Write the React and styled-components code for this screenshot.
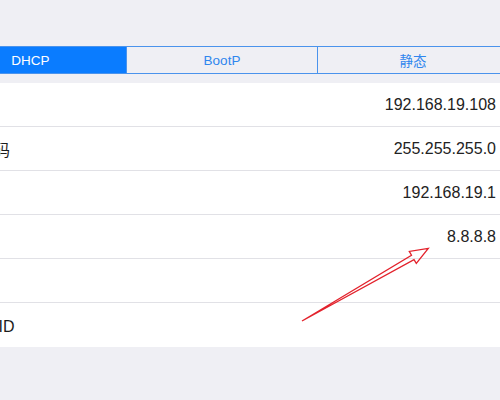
import React from "react";
import styled, { createGlobalStyle } from "styled-components";

const GlobalStyle = createGlobalStyle`
  body {
    margin: 0;
    background: #efeff4;
    font-family: "Liberation Sans", "Noto Sans CJK SC", sans-serif;
  }
`;

const Page = styled.div`
  position: relative;
  width: 500px;
  height: 400px;
  overflow: hidden;
  background: #efeff4;
`;

// the screenshot is cropped on the left, so the whole panel sits 70px off screen
const Panel = styled.div`
  margin-left: -70px;
  width: 570px;
  padding-top: 46px;
`;

// wider than the visible area: its right end is cut off in the shot
const Segmented = styled.div`
  display: grid;
  grid-template-columns: repeat(3, 191px);
  width: 576px;
  margin-left: 4px;
  height: 28px;
  box-sizing: border-box;
  border: 1.5px solid #4a93ec;
  border-radius: 4px;
  overflow: hidden;
`;

const Segment = styled.div`
  display: flex;
  align-items: center;
  justify-content: center;
  font-size: 13.5px;
  color: ${(p) => (p.$active ? "#ffffff" : "#2f86ee")};
  background: ${(p) => (p.$active ? "#0a7cff" : "#efeff4")};
  border-left: ${(p) => (p.$first ? "none" : "1.5px solid #4a93ec")};
`;

const List = styled.div`
  margin-top: 9px;
  background: #ffffff;
`;

const Row = styled.div`
  display: flex;
  align-items: center;
  justify-content: space-between;
  height: 44px;
  box-sizing: border-box;
  padding: 0 4px 0 16px;
  border-bottom: 1px solid #e1e1e6;
  &:last-child {
    border-bottom: none;
  }
`;

const Label = styled.span`
  font-size: 16px;
  color: #1c1c1c;
  white-space: nowrap;
`;

const Value = styled.span`
  font-size: 16px;
  color: #222222;
`;

const Arrow = styled.svg`
  position: absolute;
  left: 0;
  top: 0;
  pointer-events: none;
`;

const rows = [
  { label: "IP 地址", value: "192.168.19.108" },
  { label: "子网掩码", value: "255.255.255.0" },
  { label: "路由器", value: "192.168.19.1" },
  { label: "DNS", value: "8.8.8.8" },
  { label: "搜索域", value: "" },
  { label: "客户端 ID", value: "" },
];

const App = () => {
  return (
    <Page>
      <GlobalStyle />
      <Panel>
        <Segmented>
          <Segment $active $first>DHCP</Segment>
          <Segment>BootP</Segment>
          <Segment>静态</Segment>
        </Segmented>
        <List>
          {rows.map((r) => (
            <Row key={r.label}>
              <Label>{r.label}</Label>
              <Value>{r.value}</Value>
            </Row>
          ))}
        </List>
      </Panel>
      <Arrow width="500" height="400" viewBox="0 0 500 400">
        <polygon
          points="302,321 411.5,255.2 409.3,251.4 428.3,248.3 416.3,263.4 414,259.6"
          fill="none"
          stroke="#e3222c"
          strokeWidth="1.3"
          strokeLinejoin="miter"
        />
      </Arrow>
    </Page>
  );
};

export default App;
